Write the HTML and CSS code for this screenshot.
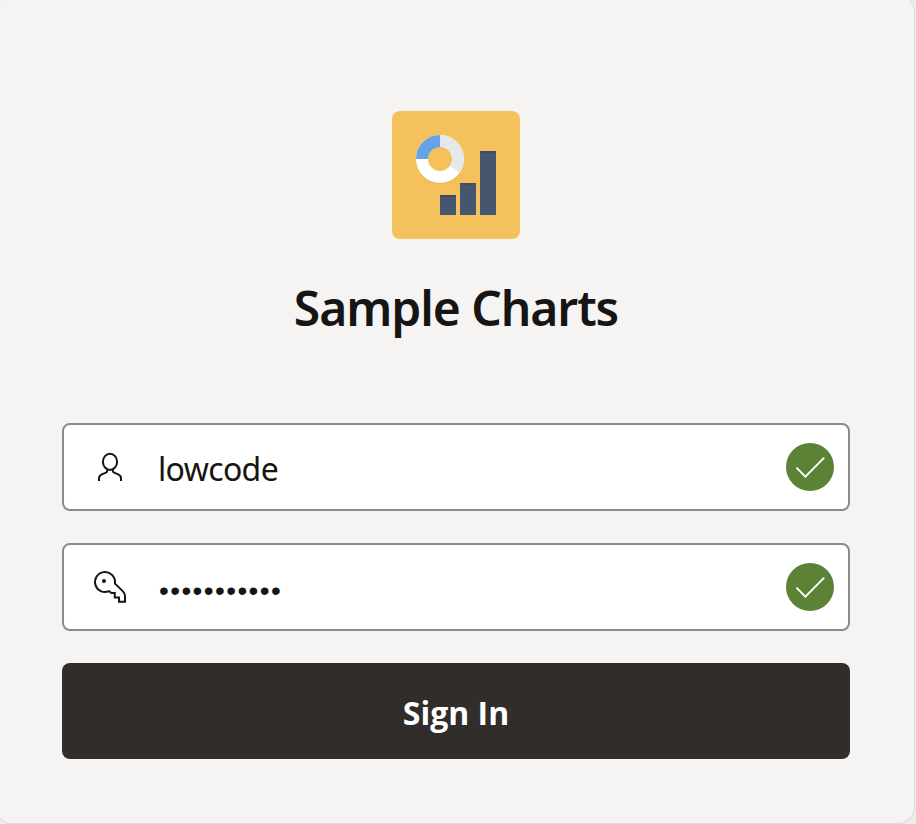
FILE: index.html
```html
<!DOCTYPE html>
<html lang="en">
<head>
<meta charset="utf-8">
<title>Sample Charts</title>
<link rel="stylesheet" href="styles.css">
</head>
<body>
<main class="card">
  <svg class="logo" viewBox="0 0 128 128" aria-hidden="true">
    <rect width="128" height="128" rx="8" fill="#f4c15d"/>
    <circle cx="48" cy="49" r="18" fill="none" stroke="#e3b253" stroke-width="12"/>
    <circle cx="48" cy="48" r="18" fill="none" stroke="#fff" stroke-width="12"/>
    <path d="M48 30A18 18 0 0 1 62.7 58.4" fill="none" stroke="#e6e7e9" stroke-width="12"/>
    <path d="M30 48A18 18 0 0 1 48 30" fill="none" stroke="#64a3e8" stroke-width="12"/>
    <path d="M48 84h16v20H48zM68 72h16v32H68zM88 40h16v64H88z" fill="#45566e"/>
    <path d="M48 84h16v2H48zM68 72h16v2H68zM88 40h16v2H88z" fill="#3d4d63"/>
  </svg>
  <h1 class="title">Sample Charts</h1>
  <form class="form">
    <div class="field">
      <svg class="field-icon" viewBox="0 0 36 36" aria-hidden="true">
        <ellipse cx="18" cy="12.8" rx="7.1" ry="8.1"/>
        <path d="M15.2 20.4v1.3c0 1.1-.7 1.8-1.8 2.2l-3.1 1.2C7.9 26 7 27.6 7 29.5V32M20.8 20.4v1.3c0 1.1.7 1.8 1.8 2.2l3.1 1.2c2.4.9 3.3 2.5 3.3 4.4V32"/>
      </svg>
      <span class="value">lowcode</span>
      <svg class="valid" viewBox="0 0 48 48" aria-hidden="true"><circle cx="24" cy="24" r="24"/><path d="M10.4 24.6l9 9L38.2 14.6"/></svg>
    </div>
    <div class="field">
      <svg class="field-icon" viewBox="0 0 36 36" aria-hidden="true">
        <path d="M23 15.2V13A10 10 0 1 0 17 22.2L19.4 24H22.8V28.4H27V32.8H33V27C33 24.8 32.2 23.6 30.5 21.9L23 14.6"/>
        <circle class="dot" cx="12" cy="12" r="2"/>
      </svg>
      <span class="value masked">•••••••••••</span>
      <svg class="valid" viewBox="0 0 48 48" aria-hidden="true"><circle cx="24" cy="24" r="24"/><path d="M10.4 24.6l9 9L38.2 14.6"/></svg>
    </div>
    <button class="submit" type="button">Sign In</button>
  </form>
</main>
</body>
</html>
```
FILE: styles.css
```css
* { box-sizing: border-box; }
html { height: 100%; overflow: hidden; background: #ececed; }
body {
  margin: 0;
  height: 824px;
  overflow: hidden;
  font-family: "Noto Sans", "Open Sans", sans-serif;
  color: #161513;
}
.card {
  width: 918px;
  height: 827px;
  margin: -4px 0 0 -4px;
  padding: 115px 64px 0 66px;
  border-radius: 16px;
  background: #f5f4f2;
  box-shadow: 0 0 0 1px #dcdcdd;
  display: flex;
  flex-direction: column;
}
.logo { width: 128px; height: 128px; margin-left: 330px; }
.title {
  margin: 37px 0 0;
  width: 788px;
  height: 64px;
  line-height: 64px;
  text-align: center;
  white-space: nowrap;
  font-size: 48px;
  font-weight: 600;
  letter-spacing: -1.05px;
}
.form {
  width: 788px;
  margin-top: 83px;
  display: flex;
  flex-direction: column;
  gap: 32px;
}
.field {
  height: 88px;
  padding: 0 14px 0 28px;
  border: 2px solid #8b8b89;
  border-radius: 8px;
  background: #fff;
  display: flex;
  align-items: center;
}
.field-icon {
  width: 36px;
  height: 36px;
  flex: none;
  fill: none;
  stroke: #161513;
  stroke-width: 2;
}
.dot { fill: #161513; stroke: none; }
.value {
  flex: 1;
  margin-left: 30px;
  padding-top: 3px;
  font-size: 32px;
  line-height: 44px;
  letter-spacing: -0.65px;
}
.masked {
  margin-left: 31px;
  padding-top: 8px;
  font-family: "Liberation Sans", sans-serif;
  font-size: 28px;
  letter-spacing: 1.4px;
}
.valid { width: 48px; height: 48px; flex: none; fill: #5c8335; }
.valid path { fill: none; stroke: #fff; stroke-width: 2; }
.submit {
  height: 96px;
  padding: 3px 0 0;
  border: 0;
  border-radius: 8px;
  background: #312d2a;
  color: #fff;
  font: 700 32px/44px "Open Sans", "Noto Sans", sans-serif;
}
```
